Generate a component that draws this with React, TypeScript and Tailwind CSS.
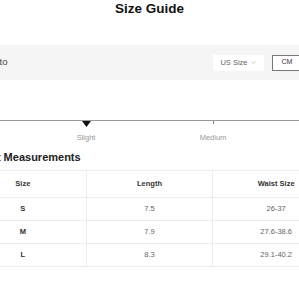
import React from 'react';
import { ChevronDown } from 'lucide-react';

const rows = [
  { size: 'S', length: '7.5', waist: '26-37' },
  { size: 'M', length: '7.9', waist: '27.6-38.6' },
  { size: 'L', length: '8.3', waist: '29.1-40.2' },
];

const fits = ['Tight', 'Slight', 'Medium', 'Loose'];

const App = () => {
  return (
    <div className="w-full overflow-hidden bg-white">
      <div className="w-[381px] ml-[-41px] font-['Liberation_Sans',Arial,sans-serif] text-[#222]">
        {/* Title */}
        <h2 className="h-[17px] leading-[17px] text-center text-[13.5px] font-bold text-[#111]">Size Guide</h2>

        {/* Options band */}
        <div className="mt-[28px] h-[35px] bg-[#f5f5f5] flex items-center justify-between pl-[29px] pr-[8px]">
          <span className="text-[9.5px] text-[#444]">Auto</span>
          <div className="flex items-center">
            <button className="h-[16px] w-[51px] bg-white flex items-center justify-center gap-[2px] text-[7.5px] text-[#666]">
              US Size
              <ChevronDown size={7} strokeWidth={1.5} className="text-[#888]" />
            </button>
            <div className="ml-[8px] flex">
              <button className="h-[16px] w-[30px] bg-white border border-[#777] flex items-center justify-center text-[7px] text-[#333]">CM</button>
              <button className="h-[16px] w-[30px] bg-white border border-[#ddd] border-l-0 flex items-center justify-center text-[7px] text-[#666]">IN</button>
            </div>
          </div>
        </div>

        {/* Fit slider */}
        <div className="mt-[40px]">
          <div className="h-px bg-[#999]" />
          <div className="flex justify-between">
            {fits.map((fit) => (
              <div key={fit} className="w-0 flex flex-col items-center">
                <div className="h-[6px] flex justify-center">
                  {fit === 'Slight' ? (
                    <svg width="9" height="6" viewBox="0 0 9 6" className="block">
                      <polygon points="0,0 9,0 4.5,6" fill="#111" />
                    </svg>
                  ) : (
                    <div className="w-px h-[3px] bg-[#888]" />
                  )}
                </div>
                <span className="mt-[6px] leading-[9px] text-[7.5px] text-[#999] whitespace-nowrap">{fit}</span>
              </div>
            ))}
          </div>
        </div>

        {/* Measurements */}
        <h3 className="mt-[8px] h-[15px] leading-[15px] text-[11px] font-bold text-[#222] whitespace-nowrap">Product Measurements</h3>

        <div className="mt-[5px] border-t border-l border-[#ececec] text-[7.5px]">
          <div className="grid grid-cols-3 border-b border-[#ececec]">
            {['Size', 'Length', 'Waist Size'].map((h) => (
              <div key={h} className="h-[26px] flex items-center justify-center border-r border-[#ececec] font-bold text-[#333]">
                {h}
              </div>
            ))}
          </div>
          {rows.map((r) => (
            <div key={r.size} className="grid grid-cols-3 border-b border-[#ececec]">
              <div className="h-[22px] flex items-center justify-center border-r border-[#ececec] font-bold text-[#333]">{r.size}</div>
              <div className="h-[22px] flex items-center justify-center border-r border-[#ececec] text-[#666]">{r.length}</div>
              <div className="h-[22px] flex items-center justify-center border-r border-[#ececec] text-[#666]">{r.waist}</div>
            </div>
          ))}
        </div>
      </div>
    </div>
  );
};

export default App;
